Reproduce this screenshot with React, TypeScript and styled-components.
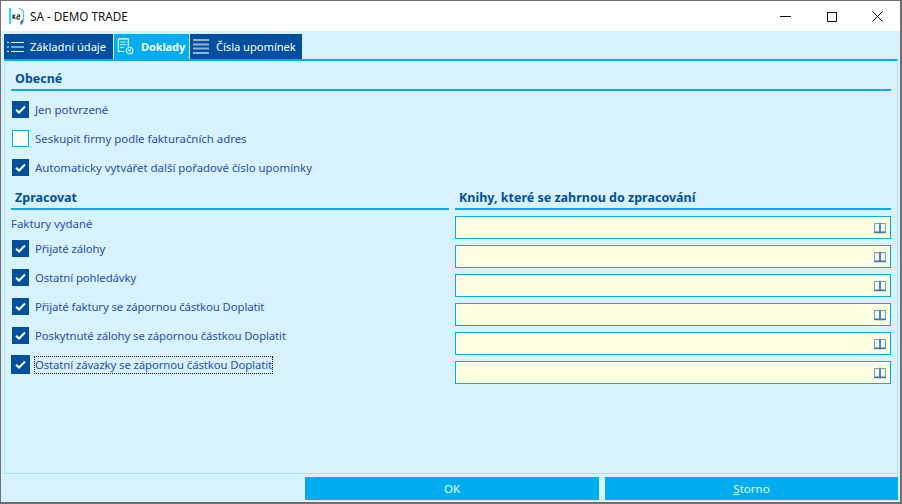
import React from "react";
import styled, { createGlobalStyle } from "styled-components";

const Global = createGlobalStyle`
  html, body { margin: 0; padding: 0; background: #d9f2ff; }
  * { box-sizing: border-box; }
`;

const Win = styled.div`
  width: 902px; height: 504px; display: flex; flex-direction: column; overflow: hidden;
  background: #d9f2ff; font-family: "Noto Sans", "Open Sans", sans-serif; font-size: 11.4px; color: #1f4fb0;
  border: 1px solid #6f6f6f; border-width: 1px 2px 2px 1px;
`;
const TitleBar = styled.div`
  height: 30px; flex: none; background: #fff; display: flex; align-items: center; padding-left: 8px;
  color: #111; font-size: 11.7px;
`;
const TitleText = styled.span` margin-left: 5px; flex: 1; `;
const WinBtn = styled.div`
  width: 46px; height: 30px; display: flex; align-items: center; justify-content: center;
`;
const Client = styled.div`
  flex: 1; display: flex; flex-direction: column; padding: 3px 2px 2px 3px; min-height: 0;
`;
const Tabs = styled.div`
  display: flex; height: 25px; flex: none; gap: 1px;
`;
const Tab = styled.div<{ $active?: boolean; $w: number }>`
  width: ${p => p.$w}px; height: 25px; display: flex; align-items: center; gap: 6px; padding-left: 3px;
  white-space: nowrap; overflow: hidden;
  background: ${p => (p.$active ? "#00aeef" : "#00509e")}; color: #fff;
  font-size: ${p => (p.$active ? "11px" : "11.2px")};
  font-weight: ${p => (p.$active ? 700 : 400)};
  letter-spacing: ${p => (p.$active ? "-0.1px" : "-0.05px")};
  svg { flex: none; }
`;
const Panel = styled.div`
  flex: 1; border: 1px solid #a6e3f7; border-top: 2px solid #00aeef; padding: 7px 6px 0 6px; min-height: 0;
`;
const Heading = styled.div`
  height: 23px; border-bottom: 2px solid #00aeef; padding-left: 4px; font-weight: 700; font-size: 12.5px;
  line-height: 20px; color: #00509e; display: flex; align-items: center;
`;
const Rows = styled.div`
  display: flex; flex-direction: column; padding-top: 10px; gap: 12px; margin-left: 1px;
`;
const TightRows = styled(Rows)`
  padding-top: 9px; letter-spacing: -0.12px;
`;
const CheckRow = styled.div`
  height: 17px; display: flex; align-items: center; gap: 6px;
`;
const Box = styled.div<{ $checked: boolean; $focused?: boolean }>`
  width: ${p => (p.$focused ? 19 : 17)}px; height: ${p => (p.$focused ? 19 : 17)}px; flex: none;
  margin: ${p => (p.$focused ? "-1px" : "0")};
  display: flex; align-items: center; justify-content: center;
  background: ${p => (p.$checked ? "#00509e" : "#fff")};
  border: 1px solid ${p => (p.$checked ? "#00509e" : "#00aeef")};
`;
const Focus = styled.span`
  outline: 1px dotted #111; outline-offset: 0; line-height: 16px; display: block;
`;
const Columns = styled.div`
  display: grid; grid-template-columns: 438px 436px; column-gap: 6px; margin-top: 11px;
`;
const Plain = styled.div`
  height: 17px; line-height: 17px; margin: 5px 0 -1px 0;
`;
const Inputs = styled.div`
  display: flex; flex-direction: column; gap: 6px; padding-top: 6px;
`;
const Field = styled.div`
  height: 23px; background: #ffffe1; border: 1px solid #00aeef; display: flex; align-items: center;
  justify-content: flex-end; padding-right: 3px;
`;
const Footer = styled.div`
  flex: none; height: 23px; margin-top: 3px; display: flex; justify-content: flex-end; gap: 6px;
`;
const Btn = styled.div<{ $w: number }>`
  width: ${p => p.$w}px; height: 23px; background: #00aeef; color: #e8f8ff; display: flex;
  align-items: center; justify-content: center; font-size: 11.5px;
`;

const Check = () => (
  <svg width="11" height="9" viewBox="0 0 11 9">
    <path d="M1 4.8 L4 7.5 L10 1.5" fill="none" stroke="#fff" strokeWidth="2" />
  </svg>
);
const CB = ({ on = true, focused = false, children }: { on?: boolean; focused?: boolean; children: React.ReactNode }) => (
  <CheckRow>
    <Box $checked={on} $focused={focused}>{on && <Check />}</Box>
    <span>{children}</span>
  </CheckRow>
);
const Book = () => (
  <svg width="14" height="12" viewBox="0 0 14 12">
    <path d="M1.5 1.5 H6.5 V10 H1.5 Z M7.5 1.5 H12.5 V10 H7.5 Z" fill="#f4f8f0" stroke="#6f9cc2" />
    <path d="M7 0.5 V11.5" stroke="#3a6ea5" strokeWidth="1" />
    <path d="M1 10.5 H13" stroke="#3f78b0" strokeWidth="1.4" />
  </svg>
);
const Logo = () => (
  <svg width="16" height="19" viewBox="0 0 16 19">
    <rect x="0" y="1" width="2" height="16" fill="#19e3ee" />
    <path d="M10 1 L14.5 4 V14 L12 18" fill="none" stroke="#5fc4ea" strokeWidth="1.4" />
    <path d="M11 15 L14 12 V15 L12 18 Z" fill="#1e7fc8" />
    <rect x="3" y="7" width="10" height="6" fill="#fff" />
    <path d="M4 7.5 V12 M4.3 10 L6.3 7.5 M4.6 9.8 L6.4 12 M8 8 H10.6 V9.8 H8 V12 H11" fill="none" stroke="#222" strokeWidth="1.1" />
  </svg>
);
const ListIcon = () => (
  <svg width="17" height="12" viewBox="0 0 17 12">
    <g stroke="#fff" strokeWidth="1">
      <path d="M4 1.5 H17 M4 6 H17 M4 10.5 H17" />
      <path d="M0 1.5 H2 M0 6 H2 M0 10.5 H2" />
    </g>
  </svg>
);
const DocIcon = () => (
  <svg width="18" height="19" viewBox="0 0 20 20">
    <path d="M1.5 1.5 H12.5 V10 M8 15.5 H1.5 V1.5" fill="none" stroke="#fff" strokeWidth="1.2" />
    <path d="M3.5 5 H10.5 M3.5 8 H10.5 M3.5 11 H8" stroke="#cfeefc" strokeWidth="1.1" />
    <circle cx="14" cy="14.5" r="3.6" fill="none" stroke="#cfeefc" strokeWidth="1.4" />
    <circle cx="14" cy="14.5" r="1.4" fill="#fff" />
  </svg>
);
const BarsIcon = () => (
  <svg width="17" height="15" viewBox="0 0 17 15">
    <path d="M0 1 H16 M0 5.5 H16 M0 9.5 H16 M0 14 H16" stroke="#8fb4d8" strokeWidth="2" />
  </svg>
);

export default function App() {
  return (
    <>
      <Global />
      <Win>
        <TitleBar>
          <Logo />
          <TitleText>SA - DEMO TRADE</TitleText>
          <WinBtn>
            <svg width="11" height="11"><path d="M0 5.5 H11" stroke="#111" /></svg>
          </WinBtn>
          <WinBtn>
            <svg width="11" height="11"><rect x="1.5" y="1.5" width="9" height="9" fill="none" stroke="#111" /></svg>
          </WinBtn>
          <WinBtn>
            <svg width="11" height="11"><path d="M0.5 0.5 L10.5 10.5 M10.5 0.5 L0.5 10.5" stroke="#111" /></svg>
          </WinBtn>
        </TitleBar>
        <Client>
          <Tabs>
            <Tab $w={109}><ListIcon /><span>Základní údaje</span></Tab>
            <Tab $w={75} $active><DocIcon /><span>Doklady</span></Tab>
            <Tab $w={112}><BarsIcon /><span>Čísla upomínek</span></Tab>
          </Tabs>
          <Panel>
            <Heading>Obecné</Heading>
            <Rows>
              <CB>Jen potvrzené</CB>
              <CB on={false}>Seskupit firmy podle fakturačních adres</CB>
              <CB>Automaticky vytvářet další pořadové číslo upomínky</CB>
            </Rows>
            <Columns>
              <div>
                <Heading>Zpracovat</Heading>
                <Plain>Faktury vydané</Plain>
                <TightRows>
                  <CB>Přijaté zálohy</CB>
                  <CB>Ostatní pohledávky</CB>
                  <CB>Přijaté faktury se zápornou částkou Doplatit</CB>
                  <CB>Poskytnuté zálohy se zápornou částkou Doplatit</CB>
                  <CB focused><Focus>Ostatní závazky se zápornou částkou Doplatit</Focus></CB>
                </TightRows>
              </div>
              <div>
                <Heading>Knihy, které se zahrnou do zpracování</Heading>
                <Inputs>
                  {[0, 1, 2, 3, 4, 5].map(i => (
                    <Field key={i}><Book /></Field>
                  ))}
                </Inputs>
              </div>
            </Columns>
          </Panel>
          <Footer>
            <Btn $w={294}>OK</Btn>
            <Btn $w={293}><span><u>S</u>torno</span></Btn>
          </Footer>
        </Client>
      </Win>
    </>
  );
}
